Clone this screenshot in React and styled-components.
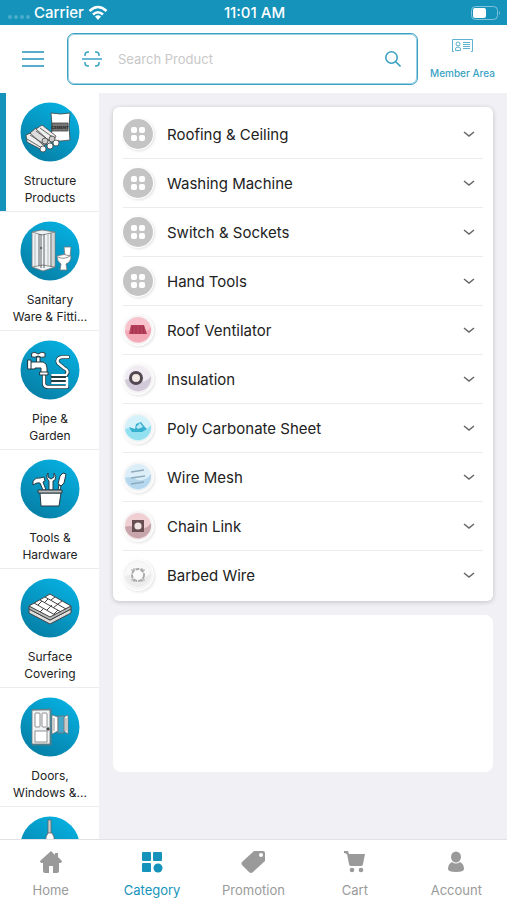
import React, { useState } from 'react';
import styled, { createGlobalStyle } from 'styled-components';

const BLUE = '#1593bb';

// Category drawings, all on a 60x60 disc
const StructureArt = () => (
  <g stroke="#444" strokeWidth="0.8" strokeLinejoin="round">
    <path d="M31 11 Q41 13 50 11 Q48 24 50 38 Q41 40 31 38 Q33 24 31 11 Z" fill="#fff" />
    <rect x="32" y="21" width="16" height="8" fill="#777" />
    <text x="40" y="27" fontSize="4" fontWeight="700" textAnchor="middle" fill="#222" stroke="none">CEMENT</text>
    <path d="M6 33 L13 30 L24 40 L24 49 L7 40 Z" fill="#eee" />
    <path d="M10 31 L16 26 L33 37 L30 42 L23 43 Z" fill="#ddd" />
    <path d="M16 27 L22 23 L36 34 L33 40 L28 38 Z" fill="#eee" />
    <path d="M7 37 L22 46 M10 33 L24 42 M16 29 L30 39 M20 26 L34 36" fill="none" />
    <circle cx="25" cy="39" r="3" fill="#ccc" />
    <circle cx="32" cy="37" r="3" fill="#ccc" />
    <circle cx="23" cy="47" r="3" fill="#fff" />
    <circle cx="30" cy="44" r="3" fill="#fff" />
    <circle cx="36" cy="41" r="3" fill="#fff" />
  </g>
);

const SanitaryArt = () => (
  <g stroke="#777" strokeWidth="0.8" strokeLinejoin="round">
    <path d="M12 11 L22 9 L35 11 L35 46 L23 50 L12 46 Z" fill="#edf2f4" />
    <path d="M12 11 L22 14 L35 11 M12 46 L23 44 L35 46" fill="none" />
    <path d="M19 13 V45 M21 13 V47 M24 13 V47 M31 12 V46" stroke="#444" fill="none" />
    <path d="M15 13 V45 M28 13 V46 M33 12 V45" stroke="#aaa" fill="none" />
    <circle cx="21" cy="27" r="1" fill="#333" />
    <path d="M44 26 H51 L50 36 H45 Z" fill="#fff" />
    <path d="M37 35 Q44 32 51 35 Q51 41 46 43 L47 49 H40 L41 43 Q37 40 37 35 Z" fill="#fff" />
    <path d="M38 36 Q44 39 50 35" fill="none" />
  </g>
);

const PipeArt = () => (
  <g fill="none" strokeLinejoin="round" strokeLinecap="round">
    <path d="M24 33 V43 Q24 47 28 47 H47 M46 35 Q50 31 44 28 L38 23 Q36 18 42 17 H48" stroke="#243b44" strokeWidth="4" />
    <path d="M32 36 H46 M32 39 H46 M32 42 H46" stroke="#243b44" strokeWidth="3" />
    <path d="M24 33 V43 Q24 47 28 47 H47 V38 M46 35 Q50 31 44 28 L38 23 Q36 18 42 17 H48" stroke="#fff" strokeWidth="2.4" />
    <path d="M32 35 H46 M32 39 H46 M32 43 H46" stroke="#fff" strokeWidth="1.8" />
    <g fill="#fff" stroke="#243b44" strokeWidth="1">
      <path d="M17 17 H20 V23 H17 Z M12 13 Q15 11 18 14 Q22 11 25 13 V17 Q21 18 18 16 Q15 18 12 17 Z" />
      <path d="M11 22 H23 Q27 23 27 28 V34 H21 V28 H15 V29 H11 Z" />
      <path d="M8 20 H11 V29 H8 Z M20 32 H28 V35 H20 Z" />
    </g>
  </g>
);

const ToolsArt = () => (
  <g fill="#fff" stroke="#263b44" strokeWidth="1" strokeLinejoin="round">
    <path d="M13 22 Q16 18 20 19 L24 18 L25 22 L23 23 L26 31 L23 31 L20 24 Q17 23 13 26 Z" />
    <path d="M28 14 V18 L31 20 L34 18 V14 Q37 17 35 21 L33 22 V31 H29 V22 Q25 18 28 14 Z" />
    <path d="M43 14 L46 15 L44 24 L41 27 L38 25 L40 17 Z M39 26 L41 27 L40 31 L38 31 Z" />
    <path d="M20 34 H41 L39 47 H21 Z" />
    <path d="M18 31 H42 V34 H18 Z" fill="#bbb" />
  </g>
);

const SurfaceArt = () => (
  <g stroke="#444" strokeWidth="1" strokeLinejoin="round">
    <path d="M9 31 V35 L30 46 L51 35 V31 L30 42 Z" fill="#ddd" />
    <path d="M9 28 V31 L30 42 L51 31 V28 L30 38 Z" fill="#bbb" />
    <path d="M30 16 L51 28 L30 39 L9 28 Z" fill="#fff" />
    <path d="M25 19 L46 31 M20 22 L41 34 M14 25 L35 37 M31 22 L35 19 M38 26 L42 23 M24 25 L28 21 M33 30 L38 26 M18 27 L22 23 M27 32 L32 27 M34 36 L38 32 M20 34 L24 30" fill="none" />
  </g>
);

const DoorsArt = () => (
  <g stroke="#777" strokeWidth="0.8">
    <path d="M12 13 H30 V47 H12 Z" fill="#edf2f4" />
    <path d="M12 13 L31 12 V48 H12" fill="none" />
    <rect x="15" y="16" width="5" height="14" rx="1" fill="#fff" />
    <rect x="22" y="16" width="5" height="14" rx="1" fill="#fff" />
    <rect x="15" y="34" width="12" height="11" fill="#fff" />
    <circle cx="28" cy="32" r="1.4" fill="#222" />
    <path d="M32 18 L38 20 V34 L32 37 Z M44 20 L48 18 V37 L44 34 Z" fill="#fff" />
    <rect x="38" y="19" width="6" height="17" fill="#41a9cb" />
    <path d="M34 21 V34 M46 21 V34" />
  </g>
);

const PaintArt = () => (
  <g fill="#fff" stroke="#666" strokeWidth="0.8">
    <rect x="28" y="4" width="3" height="16" fill="#ccc" />
    <path d="M28 17 H32 L34 21 V40 H26 V21 Z" />
  </g>
);

const categories = [
  { label: 'Structure\nProducts', art: StructureArt },
  { label: 'Sanitary\nWare & Fitti...', art: SanitaryArt },
  { label: 'Pipe &\nGarden', art: PipeArt },
  { label: 'Tools &\nHardware', art: ToolsArt },
  { label: 'Surface\nCovering', art: SurfaceArt },
  { label: 'Doors,\nWindows &...', art: DoorsArt },
  { label: '', art: PaintArt },
];

// Sub-category badges, 32x32
const GridBadge = () => (
  <>
    <circle cx="16" cy="16" r="15" fill="#c4c4c4" />
    <g fill="#fff">
      <rect x="9" y="9" width="6" height="6" rx="2" />
      <rect x="17" y="9" width="6" height="6" rx="2" />
      <rect x="9" y="17" width="6" height="6" rx="2" />
      <rect x="17" y="17" width="6" height="6" rx="2" />
    </g>
  </>
);

const TintBadge = ({ light, dark, children }) => (
  <>
    <circle cx="16" cy="16" r="15" fill="#f5f5f6" />
    <circle cx="16" cy="16" r="13" fill={light} />
    <path d="M3 17 Q9 14 16 19 Q24 20 29 13 A13 13 0 1 1 3 17 Z" fill={dark} />
    {children}
  </>
);

const RoofBadge = () => (
  <TintBadge light="#f9c3cd" dark="#f4a9b7">
    <path d="M9 11 H22 L25 20 H7 Z" fill="#b8405a" />
    <path d="M11 12 L10 20 M14 12 V20 M18 12 V20 M21 12 L22 20" stroke="#9a3350" />
  </TintBadge>
);

const InsulationBadge = () => (
  <TintBadge light="#f0ebf3" dark="#d2c9d9">
    <circle cx="14" cy="15" r="5.5" fill="#f2e8e4" stroke="#514852" strokeWidth="3" />
  </TintBadge>
);

const SheetBadge = () => (
  <TintBadge light="#d5f2fa" dark="#92e0f0">
    <path d="M7 15 L13 17 L14 12 L19 10 L22 14 L25 17 L20 20 L10 20 Z" fill="#36afd0" />
    <path d="M14 15 L18 11 L21 15 L16 17 Z" fill="#b7eaf5" />
  </TintBadge>
);

const MeshBadge = () => (
  <TintBadge light="#dceef8" dark="#b5d8ee">
    <path d="M9 11 L22 9 M9 17 L23 15 M9 23 L22 21" stroke="#8fabbc" strokeWidth="1.6" />
  </TintBadge>
);

const ChainBadge = () => (
  <TintBadge light="#efcfd2" dark="#c7a5aa">
    <rect x="10" y="10" width="12" height="12" fill="#684d51" />
    <circle cx="16" cy="16" r="3.6" fill="#f3e4e4" />
  </TintBadge>
);

const BarbedBadge = () => (
  <TintBadge light="#f8f8f8" dark="#ececec">
    <circle cx="16" cy="16" r="6" fill="#fafafa" stroke="#aaa" strokeWidth="2" strokeDasharray="4 1" />
    <path d="M9 11 H12 V9 M20 9 V11 H23 M9 21 H12 V23 M20 23 V21 H23" stroke="#aaa" fill="none" />
  </TintBadge>
);

const subCategories = [
  { name: 'Roofing & Ceiling', badge: GridBadge },
  { name: 'Washing Machine', badge: GridBadge },
  { name: 'Switch & Sockets', badge: GridBadge },
  { name: 'Hand Tools', badge: GridBadge },
  { name: 'Roof Ventilator', badge: RoofBadge },
  { name: 'Insulation', badge: InsulationBadge },
  { name: 'Poly Carbonate Sheet', badge: SheetBadge },
  { name: 'Wire Mesh', badge: MeshBadge },
  { name: 'Chain Link', badge: ChainBadge },
  { name: 'Barbed Wire', badge: BarbedBadge },
];

const tabs = [
  {
    name: 'Home',
    icon: <path d="M12 1 L1 11 Q1 13 4 13 V21 Q4 23 6 23 H10 V16 H14 V23 H18 Q20 23 20 21 V13 Q23 13 23 11 L19 7 V3 H16 V5 Z" />,
  },
  {
    name: 'Category',
    icon: (
      <>
        <rect x="2" y="2" width="9" height="9" rx="1" />
        <rect x="13" y="2" width="9" height="9" rx="1" />
        <rect x="2" y="13" width="9" height="9" rx="1" />
        <circle cx="18" cy="18" r="4.5" />
      </>
    ),
  },
  {
    name: 'Promotion',
    icon: <path fillRule="evenodd" d="M13 1 H22 Q24 1 24 3 V11 L12 22 Q10 24 8 22 L1 15 Q0 13 1 12 Z M20 3 A2 2 0 1 0 20 7 A2 2 0 1 0 20 3 Z" />,
  },
  {
    name: 'Cart',
    icon: (
      <>
        <path d="M1 1 H5 L6 4 H22 L20 14 Q20 16 18 16 H8 Q6 16 6 14 L4 4 L1 3 Z" />
        <circle cx="9" cy="20" r="2.3" />
        <circle cx="18" cy="20" r="2.3" />
      </>
    ),
  },
  {
    name: 'Account',
    icon: (
      <>
        <ellipse cx="12" cy="7" rx="5" ry="5.5" />
        <path d="M8 12 Q12 15 16 12 Q20 14 20 19 Q20 22 12 22 Q4 22 4 19 Q4 14 8 12 Z" />
      </>
    ),
  },
];

const App = () => {
  const [activeCategory, setActiveCategory] = useState(0);
  const [activeTab, setActiveTab] = useState('Category');
  const [query, setQuery] = useState('');

  return (
    <Screen>
      <GlobalStyle />
      <StatusBar>
        <Carrier>
          <SignalDots><i /><i /><i /><i /></SignalDots>
          Carrier
          <svg width="20" height="16" viewBox="0 0 20 16" fill="none" stroke="#fff" strokeWidth="2.6">
            <path d="M1.5 6 Q10 -2 18.5 6" />
            <path d="M5 9.5 Q10 5 15 9.5" />
            <path d="M7 11.5 Q10 9 13 11.5 L10 15 Z" fill="#fff" stroke="none" />
          </svg>
        </Carrier>
        <span>11:01 AM</span>
        <Battery>
          <svg width="30" height="14" viewBox="0 0 30 14">
            <rect x="0.5" y="0.5" width="26" height="13" rx="4" fill="none" stroke="#7fc3da" />
            <rect x="2" y="2" width="13" height="10" rx="2" fill="#fff" />
            <path d="M28 5 Q30 7 28 9 Z" fill="#7fc3da" />
          </svg>
        </Battery>
      </StatusBar>

      <Header>
        <MenuButton type="button" aria-label="Menu">
          <svg width="22" height="18" viewBox="0 0 22 18" stroke="#57adca" strokeWidth="2">
            <path d="M0 2 H22 M0 9 H22 M0 16 H22" />
          </svg>
        </MenuButton>
        <SearchBox onSubmit={(e) => e.preventDefault()}>
          <svg width="20" height="18" viewBox="0 0 20 18" fill="none" stroke="#3ba2c4" strokeWidth="1.5">
            <path d="M0 9 H20 M3 6 V5 Q3 2 6 2 H7 M13 2 H14 Q17 2 17 5 V6 M3 12 V13 Q3 16 6 16 H7 M13 16 H14 Q17 16 17 13 V12" />
          </svg>
          <SearchInput
            type="text"
            aria-label="Search Product"
            placeholder="Search Product"
            value={query}
            onChange={(e) => setQuery(e.target.value)}
          />
          <SearchButton type="submit" aria-label="Search">
            <svg width="16" height="16" viewBox="0 0 16 16" fill="none" stroke="#3ba2c4" strokeWidth="1.6">
              <circle cx="6.5" cy="6.5" r="5.7" />
              <path d="M10.5 10.5 L15.5 15.5" />
            </svg>
          </SearchButton>
        </SearchBox>
        <MemberLink href="#member">
          <svg width="21" height="13" viewBox="0 0 21 13" fill="none" stroke="#5eb2cd" strokeWidth="1">
            <path d="M2 12.5 H0.5 V0.5 H20.5 V12.5 H19" />
            <circle cx="6" cy="5" r="2" />
            <path d="M3.5 11.5 V10 Q3.5 8 6 8 Q8.5 8 8.5 10 V11.5 Z M11 3.5 H18 M11 5.5 H18 M11 7.5 H18 M11 9.5 H18" />
          </svg>
          Member Area
        </MemberLink>
      </Header>

      <Body>
        <Sidebar>
          {categories.map((category, index) => {
            const Art = category.art;
            return (
              <CategoryButton
                key={index}
                type="button"
                $active={index === activeCategory}
                onClick={() => setActiveCategory(index)}
              >
                <svg width="60" height="60" viewBox="0 0 60 60">
                  <defs>
                    <linearGradient id={`disc-${index}`} x1="0.8" y1="0" x2="0.2" y2="1">
                      <stop offset="0" stopColor="#06b1e2" />
                      <stop offset="1" stopColor="#067da3" />
                    </linearGradient>
                  </defs>
                  <circle cx="30" cy="30" r="29.5" fill={`url(#disc-${index})`} />
                  <Art />
                </svg>
                <CategoryLabel>{category.label}</CategoryLabel>
              </CategoryButton>
            );
          })}
        </Sidebar>

        <Content>
          <ListCard>
            {subCategories.map((item) => {
              const Badge = item.badge;
              return (
                <Row key={item.name}>
                  <RowButton type="button">
                    <BadgeIcon width="32" height="32" viewBox="0 0 32 32">
                      <Badge />
                    </BadgeIcon>
                    <RowName>{item.name}</RowName>
                    <svg width="12" height="8" viewBox="0 0 12 8" fill="none" stroke="#666" strokeWidth="1.5">
                      <path d="M1 2 L6 6 L11 2" />
                    </svg>
                  </RowButton>
                </Row>
              );
            })}
          </ListCard>
          <EmptyCard />
        </Content>
      </Body>

      <TabBar>
        {tabs.map((tab) => (
          <Tab
            key={tab.name}
            type="button"
            $active={tab.name === activeTab}
            onClick={() => setActiveTab(tab.name)}
          >
            <svg width="24" height="24" viewBox="0 0 24 24" fill="currentColor">
              {tab.icon}
            </svg>
            {tab.name}
          </Tab>
        ))}
      </TabBar>
    </Screen>
  );
};

// Styled Components
const GlobalStyle = createGlobalStyle`
  * {
    box-sizing: border-box;
  }

  body {
    margin: 0;
    font-family: Inter, "Liberation Sans", sans-serif;
  }

  button, input {
    font-family: inherit;
    border: none;
    background: none;
    padding: 0;
  }

  button {
    cursor: pointer;
  }

  svg {
    display: block;
    flex-shrink: 0;
  }
`;

const Screen = styled.div`
  display: flex;
  flex-direction: column;
  height: 100vh;
  background: #fff;
`;

const StatusBar = styled.div`
  display: grid;
  grid-template-columns: 1fr auto 1fr;
  align-items: center;
  height: 25px;
  padding: 0 6px 0 8px;
  background: ${BLUE};
  color: #fff;
  font-size: 15px;
  font-weight: 500;
`;

const Carrier = styled.div`
  display: flex;
  align-items: center;
  gap: 4px;
`;

const SignalDots = styled.span`
  display: flex;
  gap: 2px;
  padding-top: 8px;

  i {
    width: 4px;
    height: 4px;
    border-radius: 50%;
    background: #4badcb;
  }
`;

const Battery = styled.div`
  justify-self: end;
`;

const Header = styled.header`
  display: grid;
  grid-template-columns: 67px 1fr 89px;
  align-items: center;
  height: 68px;
`;

const MenuButton = styled.button`
  display: flex;
  justify-content: center;
  padding-right: 2px;
`;

const SearchBox = styled.form`
  display: flex;
  align-items: center;
  height: 52px;
  padding: 0 16px 0 14px;
  border: 1px solid #3ba2c4;
  border-radius: 7px;
  box-shadow: inset 0 0 0 1px #9dd0e2;
`;

const SearchInput = styled.input`
  flex: 1;
  min-width: 0;
  margin-left: 16px;
  font-size: 13px;
  outline: none;

  &::placeholder {
    color: #c8c8c8;
  }
`;

const SearchButton = styled.button`
  display: flex;
`;

const MemberLink = styled.a`
  display: flex;
  flex-direction: column;
  align-items: center;
  gap: 15px;
  color: #3ba2c4;
  font-size: 10px;
  font-weight: 500;
  line-height: 12px;
  text-decoration: none;
`;

const Body = styled.div`
  display: flex;
  flex: 1;
  min-height: 0;
  background: #f0f0f5;
`;

const Sidebar = styled.nav`
  width: 99px;
  flex-shrink: 0;
  overflow: hidden;
  background: #fff;
`;

const CategoryButton = styled.button`
  display: flex;
  flex-direction: column;
  align-items: center;
  gap: 10px;
  width: 100%;
  padding: 9px 0 5px 1px;
  border-bottom: 1px solid #ececf0;
  box-shadow: ${({ $active }) => ($active ? `inset 6px 0 0 ${BLUE}` : 'none')};
`;

const CategoryLabel = styled.span`
  color: #222;
  font-size: 12px;
  line-height: 17px;
  white-space: pre-line;
`;

const Content = styled.main`
  flex: 1;
  overflow: hidden;
  padding: 14px;
`;

const ListCard = styled.ul`
  margin: 0 0 14px;
  padding: 3px 10px 2px;
  list-style: none;
  background: #fff;
  border-radius: 6px;
  box-shadow: 0 1px 5px rgba(0, 0, 0, 0.2);
`;

const Row = styled.li`
  border-bottom: 1px solid #ececee;

  &:last-child {
    border-bottom: none;
  }
`;

const RowButton = styled.button`
  display: flex;
  align-items: center;
  width: 100%;
  height: 48px;
  padding-right: 8px;
  text-align: left;
`;

const BadgeIcon = styled.svg`
  margin-left: -1px;
  border-radius: 50%;
  box-shadow: 1px 1px 3px rgba(0, 0, 0, 0.12);
`;

const RowName = styled.span`
  flex: 1;
  margin-left: 13px;
  color: #222;
  font-size: 15px;
`;

const EmptyCard = styled.section`
  height: 157px;
  background: #fff;
  border-radius: 8px;
`;

const TabBar = styled.nav`
  display: grid;
  grid-template-columns: repeat(5, 1fr);
  height: 61px;
  border-top: 1px solid #e2e2e6;
`;

const Tab = styled.button`
  display: flex;
  flex-direction: column;
  align-items: center;
  gap: 8px;
  padding-top: 10px;
  color: ${({ $active }) => ($active ? BLUE : '#9a9a9a')};
  font-size: 13px;
  line-height: 17px;
`;

export default App;
